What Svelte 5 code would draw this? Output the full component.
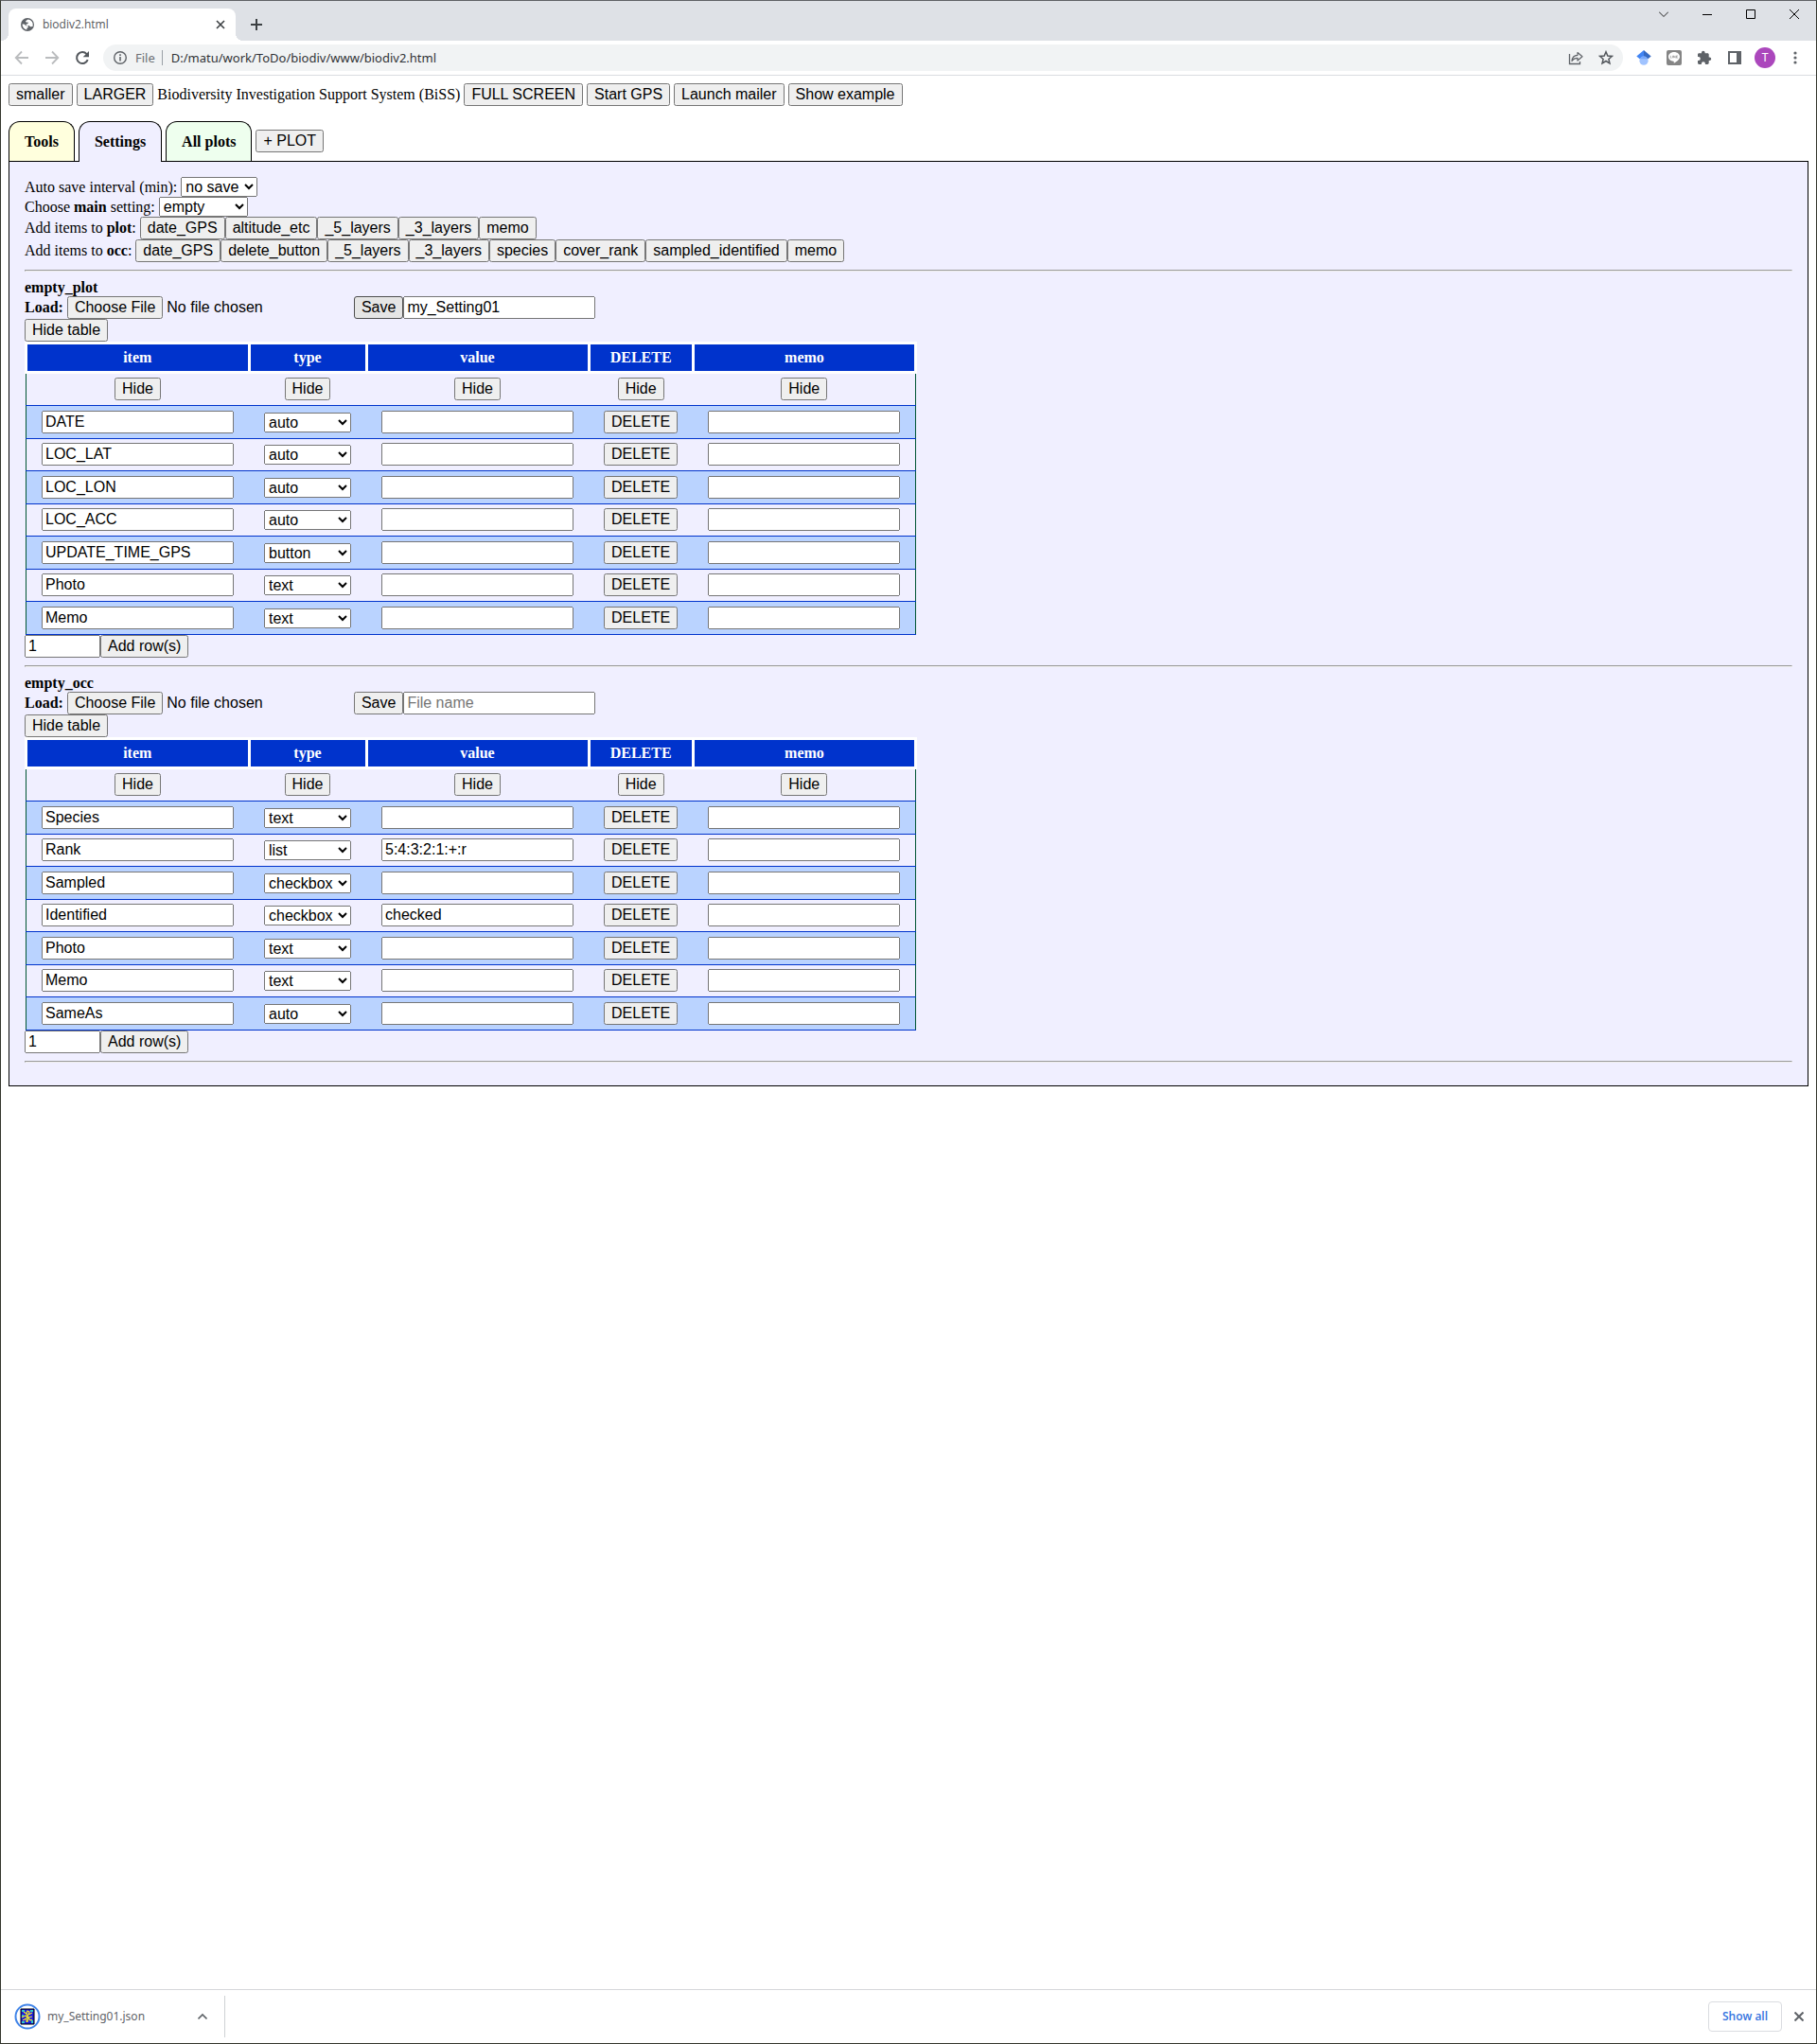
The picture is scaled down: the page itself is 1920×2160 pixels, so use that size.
<script>
  let interval = $state('no save');
  let main = $state('empty');
  const types = ['auto', 'button', 'checkbox', 'fixed', 'list', 'text'];
  const columns = ['item', 'type', 'value', 'DELETE', 'memo'];
  const plotItems = ['date_GPS', 'altitude_etc', '_5_layers', '_3_layers', 'memo'];
  const occItems = ['date_GPS', 'delete_button', '_5_layers', '_3_layers', 'species', 'cover_rank', 'sampled_identified', 'memo'];

  let tables = $state([
    {
      name: 'empty_plot',
      file: 'my_Setting01',
      focused: true,
      rows: [
        { item: 'DATE', type: 'auto', value: '', memo: '' },
        { item: 'LOC_LAT', type: 'auto', value: '', memo: '' },
        { item: 'LOC_LON', type: 'auto', value: '', memo: '' },
        { item: 'LOC_ACC', type: 'auto', value: '', memo: '' },
        { item: 'UPDATE_TIME_GPS', type: 'button', value: '', memo: '' },
        { item: 'Photo', type: 'text', value: '', memo: '' },
        { item: 'Memo', type: 'text', value: '', memo: '' }
      ]
    },
    {
      name: 'empty_occ',
      file: '',
      focused: false,
      rows: [
        { item: 'Species', type: 'text', value: '', memo: '' },
        { item: 'Rank', type: 'list', value: '5:4:3:2:1:+:r', memo: '' },
        { item: 'Sampled', type: 'checkbox', value: '', memo: '' },
        { item: 'Identified', type: 'checkbox', value: 'checked', memo: '' },
        { item: 'Photo', type: 'text', value: '', memo: '' },
        { item: 'Memo', type: 'text', value: '', memo: '' },
        { item: 'SameAs', type: 'auto', value: '', memo: '' }
      ]
    }
  ]);
</script>

<div class="window">
  <header class="tabstrip">
    <div class="browser-tab">
      <svg class="i16" viewBox="0 0 16 16" aria-hidden="true">
        <circle cx="8" cy="8" r="7" fill="#5f6368" />
        <path d="M8.600 2.600L6 4.300l.8 1.500 2-.3-.4 1.700-2.200.6.900 1.200h2.700l1.200 1.200 2.600-.3A5.600 5.600 0 0 0 8.600 2.600zM2.500 7.600c0 3 2 5.400 4.900 5.900v-1.700l1.700-1.300-.8-1.300H6.400L4.600 7.600z" fill="#fff" />
      </svg>
      <span class="tab-title">biodiv2.html</span>
      <button class="plain" aria-label="Close tab">
        <svg class="i10" viewBox="0 0 10 10"><path d="M1 1l8 8M9 1l-8 8" stroke="#3c4043" stroke-width="1.600" /></svg>
      </button>
    </div>
    <button class="plain new-tab" aria-label="New tab">
      <svg class="i12" viewBox="0 0 12 12"><path d="M6 0v12M0 6h12" stroke="#3c4043" stroke-width="2" /></svg>
    </button>
    <div class="controls">
      <button class="plain" aria-label="Search tabs"><svg class="i10" viewBox="0 0 10 10"><path d="M0 2.500l5 5 5-5" fill="none" stroke="#222" /></svg></button>
      <button class="plain" aria-label="Minimize"><svg class="i10" viewBox="0 0 10 10"><path d="M0 5.500h10" stroke="#000" /></svg></button>
      <button class="plain" aria-label="Maximize"><svg class="i10" viewBox="0 0 10 10"><path d="M.5.5h9v9h-9z" fill="none" stroke="#000" /></svg></button>
      <button class="plain" aria-label="Close window"><svg class="i10" viewBox="0 0 10 10"><path d="M0 0l10 10M10 0L0 10" stroke="#000" /></svg></button>
    </div>
  </header>

  <nav class="toolbar" aria-label="Browser">
    <button class="plain" aria-label="Back"><svg class="i16" viewBox="0 0 16 16"><path d="M15 8H2M8 1.500L1.700 8 8 14.500" fill="none" stroke="#babcbe" stroke-width="1.800" /></svg></button>
    <button class="plain" aria-label="Forward"><svg class="i16" viewBox="0 0 16 16"><path d="M1 8h13M8 1.500L14.300 8 8 14.500" fill="none" stroke="#babcbe" stroke-width="1.800" /></svg></button>
    <button class="plain" aria-label="Reload"><svg class="i16" viewBox="0 0 16 16"><path d="M13.700 10.200A6 6 0 1 1 12.600 4.100" fill="none" stroke="#54585d" stroke-width="2" /><path d="M15 1v6.300H8.700z" fill="#54585d" /></svg></button>
    <div class="omnibox">
      <svg class="i16" viewBox="0 0 16 16" aria-hidden="true"><circle cx="8" cy="8" r="6.300" fill="none" stroke="#5f6368" stroke-width="1.400" /><path d="M8 7v4.500M8 4.300v1.700" stroke="#5f6368" stroke-width="1.600" /></svg>
      <span class="scheme">File</span>
      <input class="url" aria-label="Address" value="D:/matu/work/ToDo/biodiv/www/biodiv2.html" />
      <button class="plain" aria-label="Share"><svg class="i16" viewBox="0 0 16 16"><path d="M1.500 4v10.500h11V12" fill="none" stroke="#5f6368" stroke-width="1.300" /><path d="M4 11.500c.3-4 2.500-6 6-6.200V2.500l5 4.300-5 4.200V8.300c-2.700 0-4.500.8-6 3.200z" fill="none" stroke="#5f6368" stroke-width="1.200" stroke-linejoin="round" /></svg></button>
      <button class="plain" aria-label="Bookmark"><svg class="i16" viewBox="0 0 16 16"><path d="M8 1.800l1.800 4.200 4.600.4-3.500 3 1.050 4.500L8 11.500l-3.950 2.400 1.050-4.500-3.500-3L6.200 6z" fill="none" stroke="#54585d" stroke-width="1.500" /></svg></button>
    </div>
    <div class="extensions">
      <button class="plain" aria-label="Scholar"><svg class="i16" viewBox="0 0 16 16"><path d="M8 0L.3 6.500 4 9.500h4z" fill="#4285f4" /><path d="M8 0l7.700 6.500L12 9.500H8z" fill="#356ac3" /><circle cx="8" cy="11.200" r="4.600" fill="#a0c3ff" /><path d="M3.900 9.200a4.600 4.600 0 0 1 8.200 0z" fill="#76a7fa" /></svg></button>
      <button class="plain" aria-label="LINE"><svg class="i16" viewBox="0 0 16 16"><rect width="16" height="16" rx="2" fill="#858585" /><path d="M8 2c-3.500 0-6 2.200-6 5 0 2.500 2.200 4.400 5.200 4.800.8.100.7.700.5 1.900C10.500 12.300 14 10 14 7c0-2.800-2.500-5-6-5z" fill="#fff" /><path d="M4.300 5.800v2.400h1.200M6.500 5.800v2.400M7.500 8.200V5.800l1.700 2.400V5.800M11.800 5.900h-1.300v2.300h1.300M10.500 7h1.200" fill="none" stroke="#858585" stroke-width=".6" /></svg></button>
      <button class="plain" aria-label="Extensions"><svg class="i16" viewBox="0 0 16 16"><path d="M13.500 7.500h-.8V4.600c0-.8-.6-1.400-1.400-1.400H8.600v-.7a1.800 1.800 0 0 0-3.600 0v.7H2.400C1.600 3.200 1 3.800 1 4.600v2.500h.8a2 2 0 0 1 0 4H1v2.500c0 .8.600 1.400 1.400 1.400h2.500v-.8a2 2 0 0 1 4 0v.8h2.400c.8 0 1.400-.6 1.400-1.400V11h.8a1.750 1.750 0 0 0 0-3.500z" fill="#5f6368" /></svg></button>
      <button class="plain" aria-label="Side panel"><svg class="i16" viewBox="0 0 16 16"><path d="M1 1h14v14H1zM3 3v10h7V3z" fill="#5f6368" fill-rule="evenodd" /></svg></button>
      <button class="plain avatar" aria-label="Profile T">T</button>
      <button class="plain" aria-label="Menu"><svg class="i16" viewBox="0 0 16 16"><g fill="#5f6368"><circle cx="8" cy="3" r="1.600" /><circle cx="8" cy="8" r="1.600" /><circle cx="8" cy="13" r="1.600" /></g></svg></button>
    </div>
  </nav>

  <main class="page">
    <div class="title-row">
      <button>smaller</button>
      <button>LARGER</button>
      <span>Biodiversity Investigation Support System (BiSS)</span>
      <button>FULL SCREEN</button>
      <button>Start GPS</button>
      <button>Launch mailer</button>
      <button>Show example</button>
    </div>

    <div class="tabs" role="tablist">
      <button class="tab tools" role="tab" aria-selected="false">Tools</button>
      <button class="tab settings" role="tab" aria-selected="true">Settings</button>
      <button class="tab plots" role="tab" aria-selected="false">All plots</button>
      <button>+ PLOT</button>
    </div>

    <section class="panel">
      <div class="field">
        <label for="interval">Auto save interval (min):</label>
        <select id="interval" class="interval" bind:value={interval}>
          <option>no save</option><option>1</option><option>5</option><option>10</option>
        </select>
      </div>
      <div class="field">
        <label for="main">Choose <b>main</b> setting:</label>
        <select id="main" class="main-setting" bind:value={main}>
          <option>empty</option><option>default</option>
        </select>
      </div>
      <div class="field">
        <span>Add items to <b>plot</b>:</span>
        <div class="group">{#each plotItems as name}<button>{name}</button>{/each}</div>
      </div>
      <div class="field">
        <span>Add items to <b>occ</b>:</span>
        <div class="group">{#each occItems as name}<button>{name}</button>{/each}</div>
      </div>
      <hr />

      {#each tables as table}
        <div><b>{table.name}</b></div>
        <div class="field">
          <label for="load-{table.name}"><b>Load:</b></label>
          <div class="group">
            <input id="load-{table.name}" class="load" type="file" />
            <button class:focused={table.focused}>Save</button>
            <input class="text" type="text" placeholder="File name" aria-label="File name" bind:value={table.file} />
          </div>
        </div>
        <div class="group"><button>Hide table</button></div>
        <table>
          <thead>
            <tr>{#each columns as column}<th>{column}</th>{/each}</tr>
          </thead>
          <tbody>
            <tr>{#each columns as column}<td><button aria-label="Hide {column}">Hide</button></td>{/each}</tr>
            {#each table.rows as row}
              <tr>
                <td><input class="text" type="text" aria-label="item" bind:value={row.item} /></td>
                <td>
                  <select aria-label="type" class="type" bind:value={row.type}>
                    {#each types as type}<option>{type}</option>{/each}
                  </select>
                </td>
                <td><input class="text" type="text" aria-label="value" bind:value={row.value} /></td>
                <td><button>DELETE</button></td>
                <td><input class="text" type="text" aria-label="memo" bind:value={row.memo} /></td>
              </tr>
            {/each}
          </tbody>
        </table>
        <div class="group">
          <input class="count" type="number" aria-label="Number of rows" value="1" />
          <button>Add row(s)</button>
        </div>
        <hr />
      {/each}
    </section>
  </main>

  <footer class="downloads">
    <button class="plain download">
      <svg class="i28" viewBox="0 0 28 28" aria-hidden="true">
        <circle cx="14" cy="14" r="12.500" fill="#fff" stroke="#4285e8" stroke-width="2" />
        <path d="M7 6h14v16H7z" fill="#1a1ae0" stroke="#000" />
        <path d="M8 7h3v2H8zM17 7h3v2h-3zM8 19h3v2H8zM18 18h2v3h-2zM8 12h2v2H8z" fill="#2ec8c8" />
        <path d="M10 9l3 2 1-3 2 1-1 3 4-2M8 15l4-2 2 2 5-1M9 18l4-2v4M15 15l2 3 2-1M13 11l2 4-1 5" fill="none" stroke="#f2e52c" stroke-width="1.200" />
      </svg>
      <span>my_Setting01.json</span>
    </button>
    <button class="plain" aria-label="Download options"><svg class="i10" viewBox="0 0 10 10"><path d="M.5 7.500L5 3l4.500 4.500" fill="none" stroke="#5f6368" stroke-width="1.600" /></svg></button>
    <div class="divider"></div>
    <button class="show-all">Show all</button>
    <button class="plain" aria-label="Close downloads bar"><svg class="i10" viewBox="0 0 10 10"><path d="M.5.5l9 9M9.500.5l-9 9" stroke="#5f6368" stroke-width="2" /></svg></button>
  </footer>
</div>

<style>
  :global(body) {
    margin: 0;
    background: #fff;
  }

  .window {
    box-sizing: border-box;
    min-height: 100vh;
    display: flex;
    flex-direction: column;
    border: 1px solid #33362d;
    border-top-color: #606266;
    font: 16px/18px 'Liberation Serif', 'Times New Roman', serif;
    color: #000;
  }

  svg { display: block; flex: none; }
  .i10 { width: 10px; height: 10px; }
  .i12 { width: 12px; height: 12px; }
  .i16 { width: 16px; height: 16px; }
  .i28 { width: 28px; height: 28px; }

  button, input, select {
    margin: 0;
    font-family: 'Liberation Sans', Arial, sans-serif;
    font-size: 16px;
    color: #000;
  }

  .plain {
    display: flex;
    align-items: center;
    justify-content: center;
    padding: 0;
    border: 0;
    background: none;
  }

  /* Browser chrome */
  .tabstrip {
    display: flex;
    height: 42px;
    background: #dee1e6;
  }
  .browser-tab {
    position: relative;
    box-sizing: border-box;
    display: flex;
    align-items: center;
    gap: 8px;
    width: 240px;
    margin: 8px 0 0 8px;
    padding: 0 11px 0 12px;
    border-radius: 8px 8px 0 0;
    background: #fff;
  }
  .browser-tab::before, .browser-tab::after {
    content: '';
    position: absolute;
    bottom: 0;
    width: 8px;
    height: 8px;
  }
  .browser-tab::before {
    left: -8px;
    background: radial-gradient(circle at 0 0, #dee1e6 8px, #fff 8px);
  }
  .browser-tab::after {
    right: -8px;
    background: radial-gradient(circle at 100% 0, #dee1e6 8px, #fff 8px);
  }
  .tab-title {
    flex: 1;
    font: 12px/18px 'Open Sans', 'Noto Sans', sans-serif;
    color: #55585c;
  }
  .new-tab { margin: 8px 0 0 16px; }
  .controls {
    display: flex;
    gap: 36px;
    height: 28px;
    margin-left: auto;
    padding-right: 18px;
  }

  .toolbar {
    display: flex;
    align-items: center;
    gap: 16px;
    height: 36px;
    padding: 0 14px;
    border-bottom: 1px solid #dadce0;
    background: #fff;
  }
  .omnibox {
    flex: 1;
    box-sizing: border-box;
    display: flex;
    align-items: center;
    height: 28px;
    margin: 0 -2px;
    padding: 0 10px;
    border-radius: 14px;
    background: #f1f3f4;
    font: 13px/20px 'Noto Sans', 'Open Sans', sans-serif;
  }
  .scheme {
    margin-left: 8px;
    padding-right: 7px;
    border-right: 1px solid #9aa0a6;
    line-height: 16px;
    color: #6b6f73;
  }
  .url {
    flex: 1;
    min-width: 0;
    padding: 0 9px;
    border: 0;
    background: none;
    font: 13px/20px 'Noto Sans', 'Open Sans', sans-serif;
    color: #303236;
  }
  .omnibox button + button { margin-left: 16px; }
  .extensions {
    display: flex;
    align-items: center;
    gap: 16px;
  }
  .avatar {
    width: 22px;
    height: 22px;
    margin: 0 -3px;
    border-radius: 50%;
    background: #ab47bc;
    color: #fff;
    font: 12px/22px Roboto, sans-serif;
  }

  /* Page */
  .page {
    flex: 1;
    padding: 8px;
  }
  .title-row {
    display: flex;
    flex-wrap: wrap;
    align-items: baseline;
    gap: 4px;
  }
  .tabs {
    display: flex;
    align-items: center;
    gap: 4px;
    margin-top: 16px;
  }
  .tab {
    height: 42px;
    padding: 0 16px;
    border: 1px solid #000;
    border-bottom: 0;
    border-radius: 12px 12px 0 0;
    font: bold 16px/18px 'Liberation Serif', 'Times New Roman', serif;
  }
  .tools { background: #ffffdd; }
  .plots { background: #eeffee; }
  .settings {
    z-index: 1;
    height: 43px;
    margin-bottom: -1px;
    background: #f0efff;
  }
  .panel {
    padding: 16px;
    border: 1px solid #000;
    background: #f0efff;
  }
  .field {
    display: flex;
    flex-wrap: wrap;
    align-items: baseline;
    gap: 4px;
  }
  .group {
    display: flex;
    flex-wrap: wrap;
    align-items: baseline;
  }
  .interval { width: 81px; }
  .main-setting { width: 94px; }
  hr { margin: 8px 0; }
  .load { width: 303px; }
  .focused {
    padding: 2px 7px;
    border: 1px solid #4f4f4f;
    border-radius: 3px;
    background: #e5e5e5;
  }
  .text {
    box-sizing: border-box;
    width: 203px;
  }
  .count {
    box-sizing: border-box;
    width: 80px;
  }

  table {
    border: 1px solid #005533;
    border-collapse: collapse;
  }
  th {
    padding: 5px 16px;
    border: 3px solid #fff;
    background: #0033cc;
    color: #fff;
  }
  td {
    padding: 4px 16px 5px;
    border-top: 1px solid #0033cc;
    border-bottom: 1px solid #0033cc;
    text-align: center;
  }
  tbody tr:nth-child(even) {
    background: #bad3ff;
  }
  tbody tr:nth-child(even) td { padding-top: 5px; }
  .type { width: 92px; }
  td .text, td select, td button { vertical-align: middle; }

  /* Downloads bar */
  .downloads {
    display: flex;
    align-items: center;
    height: 56px;
    padding: 0 13px 0 14px;
    border-top: 1px solid #d5d7da;
    background: #fff;
  }
  .download {
    flex: 0 0 194px;
    justify-content: flex-start;
    gap: 7px;
    font: 12px/18px 'Noto Sans', 'Open Sans', sans-serif;
    color: #5f6368;
  }
  .divider {
    width: 1px;
    height: 44px;
    margin-left: 18px;
    background: #cfd1d4;
  }
  .show-all {
    width: 78px;
    height: 32px;
    margin: 0 13px 0 auto;
    padding: 0;
    border: 1px solid #dadce0;
    border-radius: 4px;
    background: #fff;
    font: 600 12px/18px 'Open Sans', 'Noto Sans', sans-serif;
    color: #3474e0;
  }
</style>
